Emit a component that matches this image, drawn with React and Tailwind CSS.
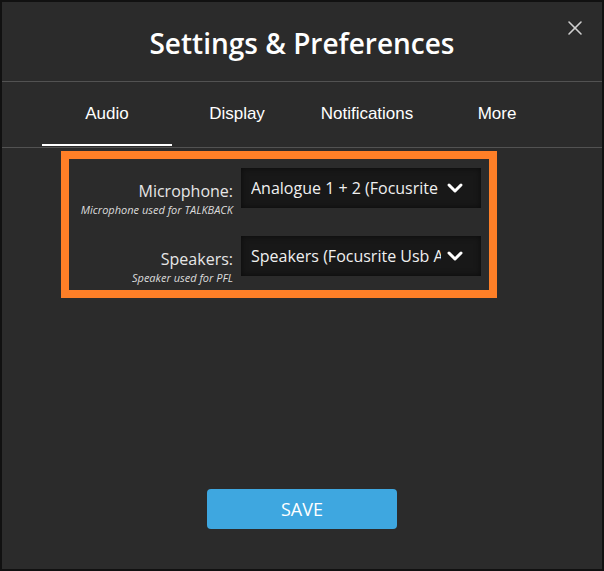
import { ChevronDown } from 'lucide-react'

const tabs = ['Audio', 'Display', 'Notifications', 'More']

const devices = [
  { label: 'Microphone:', hint: 'Microphone used for TALKBACK', value: 'Analogue 1 + 2 (Focusrite USB Audio)' },
  { label: 'Speakers:', hint: 'Speaker used for PFL', value: 'Speakers (Focusrite Usb Audio)' },
]

function DeviceRow({ label, hint, value }) {
  return (
    <div className="flex h-[40px] items-start">
      <div className="w-[164px] pt-[12px] text-right">
        <div className="text-[16px] leading-[22px] text-[#e6e6e6]">{label}</div>
        <div className="text-[11px] italic leading-[15px] text-[#dcdcdc]">{hint}</div>
      </div>
      <div className="ml-[8px] flex h-[40px] w-[240px] items-center bg-[#181818] pl-[10px] shadow-[inset_0_0_6px_rgba(0,0,0,0.6)]">
        <span className="w-[190px] overflow-hidden whitespace-nowrap text-[16px] text-[#f0f0f0]">{value}</span>
        <ChevronDown className="ml-[2px] shrink-0 text-white" size={24} strokeWidth={3} />
      </div>
    </div>
  )
}

export default function App() {
  return (
    <div className="h-[571px] w-[604px] bg-[#111] p-[2px]" style={{ fontFamily: '"Open Sans", "Noto Sans", sans-serif' }}>
      <div className="relative flex h-full flex-col bg-[#2b2b2b]">
        <button className="absolute right-[19px] top-[18px] text-[#cfcfcf]" aria-label="Close">
          <svg width="16" height="16" viewBox="0 0 16 16" stroke="currentColor" strokeWidth="1.6" strokeLinecap="round">
            <line x1="2" y1="2" x2="14" y2="14" />
            <line x1="14" y1="2" x2="2" y2="14" />
          </svg>
        </button>

        <div className="flex h-[80px] items-center justify-center border-b border-[#525252] pt-[3px]">
          <h1 className="text-[28px] font-semibold text-white">Settings &amp; Preferences</h1>
        </div>

        <div className="flex h-[66px] border-b border-[#525252] pl-[40px]" style={{ fontFamily: '"Liberation Sans", Arial, sans-serif' }}>
          {tabs.map((t, i) => (
            <div key={t} className="relative flex w-[130px] items-center justify-center pb-[2px] text-[17px] text-white">
              {t}
              {i === 0 && <div className="absolute bottom-[1px] left-0 h-[2px] w-full bg-white" />}
            </div>
          ))}
        </div>

        <div className="flex-1 pl-[59px] pt-[3px]">
          <div className="flex h-[147px] w-[436px] flex-col gap-[28px] border-8 border-[#fe7f27] pt-[9px]">
            {devices.map((d) => (
              <DeviceRow key={d.label} {...d} />
            ))}
          </div>
        </div>

        <div className="flex justify-center pb-[40px]">
          <button className="h-[40px] w-[190px] rounded-[4px] bg-[#3ea7e0] text-[18px] text-white">SAVE</button>
        </div>
      </div>
    </div>
  )
}
